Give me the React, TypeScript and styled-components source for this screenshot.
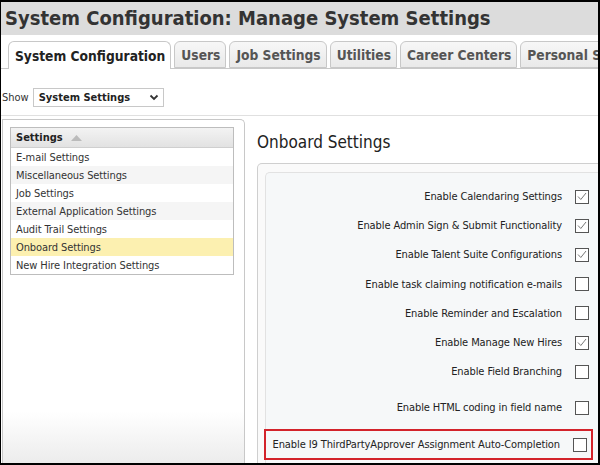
import React from "react";
import styled, { createGlobalStyle } from "styled-components";

const Global = createGlobalStyle`
  html, body { margin: 0; padding: 0; background: #fff; }
  body { font-family: "DejaVu Sans Condensed", "DejaVu Sans", sans-serif; color: #333; }
  * { box-sizing: border-box; }
`;

const Frame = styled.div`
  width: 600px;
  height: 465px;
  border: 2px solid #000;
  border-left-width: 1px;
  overflow: hidden;
  display: flex;
  flex-direction: column;
  background: #fff;
`;

const TitleBar = styled.div`
  height: 33px;
  background: #dcdcdc;
  padding: 4px 0 0 4px;
  font-size: 20px;
  font-weight: bold;
  color: #333;
  white-space: nowrap;
`;

const TabBar = styled.div`
  margin-top: 6px;
  height: 28px;
  display: flex;
  align-items: flex-end;
  gap: 3px;
  padding-left: 7px;
  border-bottom: 1px solid #c8c8c8;
  white-space: nowrap;
`;

const Tab = styled.div<{ $active?: boolean }>`
  height: ${(p) => (p.$active ? "28px" : "27px")};
  margin-bottom: ${(p) => (p.$active ? "-1px" : "0")};
  padding: 0 5px 0 6px;
  display: flex;
  align-items: center;
  border: 1px solid #c8c8c8;
  border-bottom: ${(p) => (p.$active ? "none" : "1px solid #c8c8c8")};
  border-radius: 6px 6px 0 0;
  background: ${(p) => (p.$active ? "#fff" : "linear-gradient(#f7f7f7, #e9e9e9)")};
  color: ${(p) => (p.$active ? "#222" : "#555")};
  font-size: 13.7px;
  font-weight: bold;
  flex-shrink: 0;
`;

const ShowRow = styled.div`
  height: 47px;
  display: flex;
  align-items: center;
  gap: 4px;
  padding: 10px 0 0 1px;
  border-bottom: 1px solid #e0e0e0;
  font-size: 11px;
`;

const Select = styled.div`
  width: 131px;
  height: 19px;
  border: 1px solid #c8c8c8;
  display: flex;
  align-items: center;
  justify-content: space-between;
  padding: 0 4px 0 5px;
  font-weight: bold;
  color: #222;
  font-size: 11px;
`;

const Main = styled.div`
  flex: 1;
  display: grid;
  grid-template-columns: 244px 1fr;
  column-gap: 12px;
  padding-top: 3px;
  min-height: 0;
`;

const LeftPanel = styled.div`
  border: 1px solid #c8c8c8;
  border-bottom: none;
  border-radius: 0 5px 0 0;
  background: linear-gradient(#fff 85%, #ececec);
  padding: 7px 10px 0 7px;
  margin-left: 1px;
`;

const Table = styled.div`
  border: 1px solid #bdbdbd;
  background: #fff;
`;

const HeaderCell = styled.div`
  height: 20px;
  display: flex;
  align-items: center;
  gap: 8px;
  padding-left: 5px;
  background: linear-gradient(#f3f3f3, #e2e2e2);
  border-bottom: 1px solid #cfcfcf;
  font-weight: bold;
  font-size: 11px;
  color: #222;
`;

const Row = styled.div<{ $alt?: boolean; $selected?: boolean }>`
  height: 18px;
  display: flex;
  align-items: center;
  padding-left: 5px;
  font-size: 11px;
  letter-spacing: -0.1px;
  color: #333;
  background: ${(p) => (p.$selected ? "#fcf0b0" : p.$alt ? "#f5f5f5" : "#fff")};
`;

const Right = styled.div`
  display: flex;
  flex-direction: column;
  min-width: 0;
  overflow: hidden;
`;

const Heading = styled.div`
  height: 44px;
  padding-top: 13px;
  font-size: 17px;
  color: #222;
  white-space: nowrap;
`;

const OuterBox = styled.div`
  flex: 1;
  width: 360px;
  border: 1px solid #cfcfcf;
  border-bottom: none;
  border-radius: 5px 0 0 0;
  background: #fafafa;
  padding: 8px 0 0 7px;
  display: flex;
`;

const InnerBox = styled.div`
  flex: 1;
  border: 1px solid #e2e2e2;
  border-right: none;
  border-bottom: none;
  border-radius: 5px 0 0 0;
  background: #f6f8f9;
  padding-top: 9px;
  display: flex;
  flex-direction: column;
`;

const SettingRow = styled.div<{ $h: number; $highlight?: boolean }>`
  height: ${(p) => p.$h}px;
  flex-shrink: 0;
  width: 328px;
  display: flex;
  align-items: center;
  justify-content: flex-end;
  gap: 13px;
  padding-right: 5px;
  font-size: 11px;
  letter-spacing: -0.1px;
  color: #222;
  white-space: nowrap;
  ${(p) => (p.$highlight ? "border: 2px solid #d3232b; margin-left: -2px; width: 329px; padding-right: 4px;" : "")}
`;

const Box = styled.span`
  width: 14px;
  height: 14px;
  border: 1px solid #555;
  background: #fff;
  display: inline-flex;
  align-items: center;
  justify-content: center;
  flex-shrink: 0;
`;

const Check = () => (
  <svg width="10" height="9" viewBox="0 0 10 9">
    <path d="M1 4.5 L3.8 7.5 L9 1" fill="none" stroke="#777" strokeWidth="1" />
  </svg>
);

const Chevron = () => (
  <svg width="10" height="7" viewBox="0 0 10 7">
    <path d="M1.5 1.5 L5 5 L8.5 1.5" fill="none" stroke="#333" strokeWidth="1.8" />
  </svg>
);

const SortUp = () => (
  <svg width="11" height="6" viewBox="0 0 11 6">
    <path d="M0 6 L5.5 0 L11 6 Z" fill="#bbb" />
  </svg>
);

const tabs = ["System Configuration", "Users", "Job Settings", "Utilities", "Career Centers", "Personal Settings"];

const settingsList = [
  "E-mail Settings",
  "Miscellaneous Settings",
  "Job Settings",
  "External Application Settings",
  "Audit Trail Settings",
  "Onboard Settings",
  "New Hire Integration Settings",
];

const options: { label: string; checked: boolean; h: number; highlight?: boolean }[] = [
  { label: "Enable Calendaring Settings", checked: true, h: 29.2 },
  { label: "Enable Admin Sign & Submit Functionality", checked: true, h: 29.2 },
  { label: "Enable Talent Suite Configurations", checked: true, h: 29.2 },
  { label: "Enable task claiming notification e-mails", checked: false, h: 29.2 },
  { label: "Enable Reminder and Escalation", checked: false, h: 29.2 },
  { label: "Enable Manage New Hires", checked: true, h: 29.2 },
  { label: "Enable Field Branching", checked: false, h: 29.2 },
  { label: "Enable HTML coding in field name", checked: false, h: 43 },
  { label: "Enable I9 ThirdPartyApprover Assignment Auto-Completion", checked: false, h: 31, highlight: true },
];

export default function App() {
  return (
    <>
      <Global />
      <Frame>
        <TitleBar>System Configuration: Manage System Settings</TitleBar>
        <TabBar>
          {tabs.map((t, i) => (
            <Tab key={t} $active={i === 0}>
              {t}
            </Tab>
          ))}
        </TabBar>
        <ShowRow>
          <span>Show</span>
          <Select>
            <span>System Settings</span>
            <Chevron />
          </Select>
        </ShowRow>
        <Main>
          <LeftPanel>
            <Table>
              <HeaderCell>
                <span>Settings</span>
                <SortUp />
              </HeaderCell>
              {settingsList.map((s, i) => (
                <Row key={s} $alt={i % 2 === 1 && i !== 5} $selected={i === 5}>
                  {s}
                </Row>
              ))}
            </Table>
          </LeftPanel>
          <Right>
            <Heading>Onboard Settings</Heading>
            <OuterBox>
              <InnerBox>
                {options.map((o) => (
                  <SettingRow key={o.label} $h={o.h} $highlight={o.highlight}>
                    <span>{o.label}</span>
                    <Box>{o.checked && <Check />}</Box>
                  </SettingRow>
                ))}
              </InnerBox>
            </OuterBox>
          </Right>
        </Main>
      </Frame>
    </>
  );
}
